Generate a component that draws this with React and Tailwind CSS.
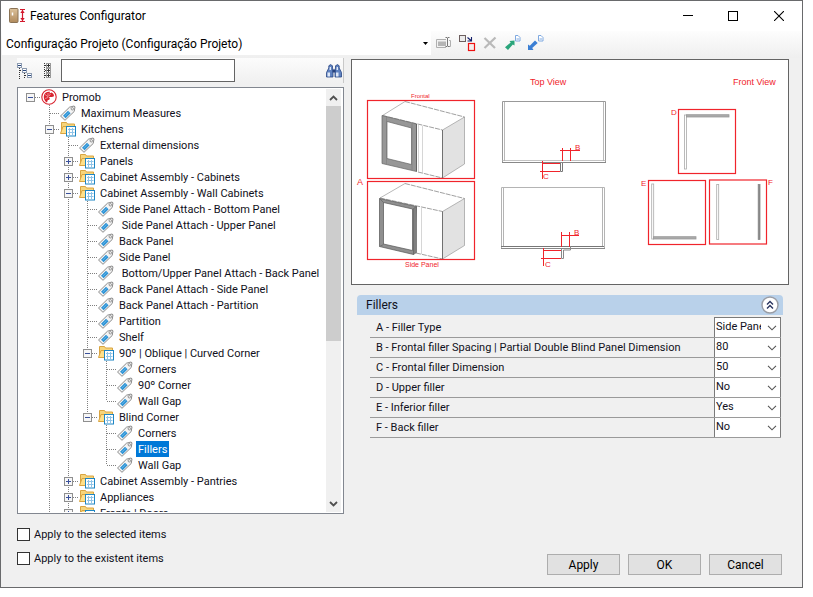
import React, { useState } from 'react';

const TREE = [
  {
    label: 'Promob', icon: 'logo', open: true, children: [
      { label: 'Maximum Measures' },
      {
        label: 'Kitchens', icon: 'folder', open: true, more: true, children: [
          { label: 'External dimensions' },
          { label: 'Panels', icon: 'folder' },
          { label: 'Cabinet Assembly - Cabinets', icon: 'folder' },
          {
            label: 'Cabinet Assembly - Wall Cabinets', icon: 'folder', open: true, children: [
              { label: 'Side Panel Attach - Bottom Panel' },
              { label: ' Side Panel Attach - Upper Panel' },
              { label: 'Back Panel' },
              { label: 'Side Panel' },
              { label: ' Bottom/Upper Panel Attach - Back Panel' },
              { label: 'Back Panel Attach - Side Panel' },
              { label: 'Back Panel Attach - Partition' },
              { label: 'Partition' },
              { label: 'Shelf' },
              {
                label: '90º | Oblique | Curved Corner', icon: 'folder', open: true, children: [
                  { label: 'Corners' }, { label: '90º Corner' }, { label: 'Wall Gap' },
                ],
              },
              {
                label: 'Blind Corner', icon: 'folder', open: true, children: [
                  { label: 'Corners' }, { label: 'Fillers' }, { label: 'Wall Gap' },
                ],
              },
            ],
          },
          { label: 'Cabinet Assembly - Pantries', icon: 'folder' },
          { label: 'Appliances', icon: 'folder' },
          { label: 'Fronts | Doors', icon: 'folder', more: true },
        ],
      },
    ],
  },
];

const PROPERTIES = [
  { id: 'a', label: 'A - Filler Type', options: ['Side Panel', 'Frontal'] },
  { id: 'b', label: 'B - Frontal filler Spacing | Partial Double Blind Panel Dimension', options: ['80', '50'] },
  { id: 'c', label: 'C - Frontal filler Dimension', options: ['50', '80'] },
  { id: 'd', label: 'D - Upper filler', options: ['No', 'Yes'] },
  { id: 'e', label: 'E - Inferior filler', options: ['Yes', 'No'] },
  { id: 'f', label: 'F - Back filler', options: ['No', 'Yes'] },
];

function LogoIcon() {
  return (
    <svg width="18" height="16" viewBox="0 0 18 16" aria-hidden="true" className="shrink-0">
      <circle cx="9" cy="8" r="7.200" fill="#fff" stroke="#d8232f" strokeWidth="1.100" />
      <path d="M7 13.500C3.500 12 2.500 6 6 3.600c1-.8 2.500-1 4-.8l-.5 1.700 2-1c1.800.8 2.500 2 2.500 3.800L12 8H9l.8 1.500c-.2 1-1 1.500-2 1.500z" fill="#d8232f" />
      <path d="M5 5.500 8.500 8M8 4v3.500M5 9.500l3-1M10.500 5l-1.500 2" stroke="#f8b9bd" strokeWidth=".7" />
    </svg>
  );
}

function TagIcon() {
  return (
    <svg width="18" height="16" viewBox="0 0 18 16" aria-hidden="true" className="shrink-0">
      <path d="M1.500 11 10.500 2.200 15 1l1 .8-.8 4.700L6 15.300z" fill="#f4f4f4" stroke="#8b8b8b" strokeWidth="1" strokeLinejoin="round" />
      <path d="m4 10.800 5-5 2.600 2.400-5 5z" fill="#2f94d6" />
      <path d="m5.800 11.300 4-4" stroke="#6fbbea" strokeWidth=".8" />
      <circle cx="13.300" cy="3.800" r="1.200" fill="#fff" stroke="#777" strokeWidth=".8" />
    </svg>
  );
}

function FolderIcon() {
  return (
    <svg width="18" height="16" viewBox="0 0 18 16" aria-hidden="true" className="shrink-0">
      <path d="M2.500 12.500v-11h5l1 1.500h7v4" fill="#f6d57c" stroke="#d9a441" />
      <path d="m1.500 12.500 2.500-7h11v7z" fill="#ffe08a" stroke="#d9a441" />
      <rect x="7.500" y="5.500" width="9" height="9.500" fill="#fff" stroke="#1f86c4" />
      <path d="M9 8.500h6.500M9 11.500h6.500M10.500 7v7M13.500 7v7" stroke="#8fc4e8" />
    </svg>
  );
}

/* One step of the dotted connector between a branch and its parent. */
function Guide({ up, down, across }) {
  return (
    <svg width="19" height="16" viewBox="0 0 19 16" shapeRendering="crispEdges" aria-hidden="true" className="shrink-0">
      <g stroke="#808080" strokeDasharray="1 1" fill="none">
        {up && <path d="M9.500 0v8" />}
        {down && <path d="M9.500 8v8" />}
        {across && <path d="M10 8.500h9" />}
      </g>
    </svg>
  );
}

function Toggle({ open, up, down, onClick, label }) {
  return (
    <button type="button" aria-label={label} onClick={onClick} className="block shrink-0">
      <svg width="19" height="16" viewBox="0 0 19 16" shapeRendering="crispEdges" aria-hidden="true">
        <g stroke="#808080" strokeDasharray="1 1">
          {up && <path d="M9.500 0v4" />}
          {down && <path d="M9.500 12v4" />}
          <path d="M14 8.500h5" />
        </g>
        <rect x="5.500" y="4.500" width="8" height="8" fill="#f6f6f6" stroke="#8f8f8f" />
        <path d="M7 8.500h5" stroke="#39509a" />
        {!open && <path d="M9.500 6v5" stroke="#39509a" />}
      </svg>
    </button>
  );
}

function TreeNode({ node, trail, isLast, selected, onSelect }) {
  const [open, setOpen] = useState(Boolean(node.open));
  const root = trail.length === 0;
  const down = !isLast || Boolean(node.more);
  const current = { up: !root, down: !root && down };
  const active = selected === node.label;
  return (
    <li role="treeitem" aria-expanded={node.icon ? open : undefined}>
      <div className="flex h-4 items-center whitespace-pre">
        {trail.map((line, i) => <Guide key={i} up={line} down={line} />)}
        {node.icon
          ? <Toggle open={open} {...current} label={`Toggle ${node.label}`} onClick={() => setOpen(!open)} />
          : <Guide {...current} across />}
        {node.icon === 'logo' ? <LogoIcon /> : node.icon === 'folder' ? <FolderIcon /> : <TagIcon />}
        <button
          type="button"
          onClick={() => onSelect(node.label)}
          className={active ? 'ml-0.5 h-4 bg-[#0078d7] px-0.5 leading-[18px] text-white' : 'ml-0.5 h-4 px-0.5 leading-[18px] text-[#101020]'}
        >
          {node.label}
        </button>
      </div>
      {node.children && open && (
        <ul role="group">
          {node.children.map((child, i) => (
            <TreeNode
              key={child.label}
              node={child}
              trail={[...trail, !root && down]}
              isLast={i === node.children.length - 1}
              selected={selected}
              onSelect={onSelect}
            />
          ))}
        </ul>
      )}
    </li>
  );
}

function DoorIcon() {
  return (
    <svg width="18" height="16" viewBox="0 0 18 16" aria-hidden="true">
      <defs>
        <linearGradient id="door" x1="0" x2="0" y1="0" y2="1">
          <stop offset="0" stopColor="#dcc29b" />
          <stop offset="1" stopColor="#b08a5c" />
        </linearGradient>
      </defs>
      <rect x="1.500" y=".5" width="8.500" height="14" rx="1" fill="url(#door)" stroke="#8a7355" />
      <path d="M4.500 4.500v3" stroke="#fff" strokeWidth="1.500" />
      <path d="M12 1.500h5M12 13.500h5M14.500 2v11" stroke="#d3182c" strokeWidth="1.200" />
      <path d="m12.300 5 2.200-3 2.200 3zM12.300 10l2.200 3 2.200-3z" fill="#d3182c" />
    </svg>
  );
}

function RenameIcon() {
  return (
    <svg width="18" height="16" viewBox="0 0 18 16" aria-hidden="true">
      <path d="M11 4.500H1.500v8H11" fill="#f2f2f2" stroke="#b0b0b0" />
      <path d="M14 5.500h1.500v6H14" fill="none" stroke="#b0b0b0" />
      <rect x="3" y="6.500" width="8" height="4.500" fill="#b5b5b5" />
      <path d="M10.500 2.500h1.500l.5.500.5-.5h1.500M12.500 3v8M10.500 11.500h1.500l.5-.5.5.5h1.500" fill="none" stroke="#777" />
    </svg>
  );
}

function ReplaceIcon() {
  return (
    <svg width="18" height="18" viewBox="0 0 18 18" aria-hidden="true">
      <rect x="1.500" y="1.500" width="6" height="6" fill="#ececec" stroke="#6d5f5f" />
      <rect x="10.500" y="9.500" width="6" height="7" fill="#f4eeee" stroke="#ee1111" strokeWidth="1.200" />
      <path d="m9.500 3.500 3.500 3M13.500 3v4h-4" fill="none" stroke="#15206b" strokeWidth="1.100" />
    </svg>
  );
}

function DeleteIcon() {
  return (
    <svg width="14" height="14" viewBox="0 0 14 14" aria-hidden="true">
      <path d="m1.500 2 10.500 10M12.500 1.500 1.500 12" stroke="#b9b9b9" strokeWidth="2.200" />
    </svg>
  );
}

function PageGlyph() {
  return (
    <>
      <path d="M11.500.5h2.500l2 2v3.500h-4.500z" fill="#fff" stroke="#7fa9e0" />
      <path d="M12.500 4h2.500" stroke="#7fa9e0" />
    </>
  );
}

function ExportIcon() {
  return (
    <svg width="17" height="16" viewBox="0 0 17 16" aria-hidden="true">
      <PageGlyph />
      <path d="M10.500 5.500v5L8.800 9.500 4 15 1 12.200 6.700 7.500 5.500 6z" fill="#2aa57b" />
    </svg>
  );
}

function ImportIcon() {
  return (
    <svg width="17" height="16" viewBox="0 0 17 16" aria-hidden="true">
      <PageGlyph />
      <path d="M1 15V9.500l1.800 1.300L8 5.500 10.700 8 5.200 13l1.300 2z" fill="#3b7fd4" />
    </svg>
  );
}

function CollapseAllIcon() {
  return (
    <svg width="16" height="16" viewBox="0 0 16 16" shapeRendering="crispEdges" aria-hidden="true">
      <path d="M2.500 5v11M3 7.500h3M7.500 10v6M8 12.500h3" stroke="#333" strokeDasharray="1 1" />
      <g fill="#fff" stroke="#8d9bb0">
        <rect x=".5" y=".5" width="4" height="4" />
        <rect x="5.500" y="5.500" width="4" height="4" />
        <rect x="10.500" y="10.500" width="4" height="4" />
      </g>
      <path d="M1 2.500h3M6 7.500h3M11 12.500h3" stroke="#2b4a80" />
    </svg>
  );
}

function ExpandAllIcon() {
  return (
    <svg width="9" height="16" viewBox="0 0 9 16" shapeRendering="crispEdges" aria-hidden="true">
      <path d="M1.500 0v16M2 2.500h2M2 7.500h2M2 12.500h2" stroke="#333" strokeDasharray="1 1" />
      <g fill="#fff" stroke="#999">
        <rect x="3.500" y=".5" width="4" height="4" />
        <rect x="3.500" y="5.500" width="4" height="4" />
        <rect x="3.500" y="10.500" width="4" height="4" />
      </g>
      <path d="M4 2.500h3M5.500 1v3M4 7.500h3M5.500 6v3M4 12.500h3M5.500 11v3" stroke="#333" />
    </svg>
  );
}

function BinocularsIcon() {
  return (
    <svg width="16" height="14" viewBox="0 0 16 14" aria-hidden="true">
      <path d="M.5 13V8.500L2.800 4V1.800L4.500.6l2 1.200V4L7 6v7zM15.500 13V8.500L13.200 4V1.800L11.500.6l-2 1.200V4L9 6v7z" fill="#5f82c0" stroke="#2a4684" strokeWidth=".8" />
      <path d="M6.500 5.500h3v3h-3z" fill="#27427e" />
      <path d="M1.500 8.500h2.500V12.500H1.500zM10 8.500h2.500v4H10zM3.700 3h1.300v3H3.500zM10.700 3H12v3h-1.500z" fill="#dfe8f7" />
    </svg>
  );
}

/* Technical drawing of the filler positions A to F. */
function FillerDrawing() {
  const red = '#f0242b';
  return (
    <svg viewBox="352 60 436 224" role="img" aria-label="Filler positions" className="block h-[224px] w-full" fontFamily='"Liberation Sans", Arial, sans-serif' fill={red}>
      <text x="530" y="85" fontSize="9">Top View</text>
      <text x="733" y="85" fontSize="9">Front View</text>
      <text x="357" y="185" fontSize="9">A</text>
      <text x="411" y="98" fontSize="6">Frontal</text>
      <text x="405" y="267" fontSize="7">Side Panel</text>
      <text x="575" y="150" fontSize="8">B</text>
      <text x="543" y="179" fontSize="8">C</text>
      <text x="574" y="235" fontSize="8">B</text>
      <text x="545" y="267" fontSize="8">C</text>
      <text x="671" y="115" fontSize="8">D</text>
      <text x="641" y="186" fontSize="8">E</text>
      <text x="768" y="185" fontSize="8">F</text>

      <g stroke="#999" strokeWidth=".7" fill="none">
        <path d="M464.500 117v47L442.500 178v-48z" fill="#e2e2e2" />
        <path d="M382.500 115.500 405 101.500" />
        <path d="M405 101.500 464.500 117M382.500 115.500l60 14.500M418 172l24.500 6" strokeDasharray="5 1" stroke="#777" />
        <path d="M418.500 125v47M422.500 126v47" stroke="#c4c4c4" />
        <path fillRule="evenodd" d="M382 115.500 416.500 124v47.500l-34.500-8zM387 121.500v37l24.500 6V128z" fill="#979797" stroke="#666" />
        <path d="M386.500 117v47M412 124v46" stroke="#777" strokeWidth=".5" />
        <path d="M416.500 124v47.500M442.500 130v48" stroke="#555" />
      </g>
      <g stroke="#999" strokeWidth=".7" fill="none">
        <path d="M464.500 198.500v47L442.500 259v-47.500z" fill="#e2e2e2" />
        <path d="M380 198 405 183.500" />
        <path d="M405 183.500 464.500 198.500M380 198l62.500 13.500M416 253l26.500 6" strokeDasharray="5 1" stroke="#777" />
        <path d="M421.500 208v46" stroke="#c4c4c4" />
        <path fillRule="evenodd" d="M379.500 198.500 416.500 206.500 413.500 254.500 379.500 246.500zM383.500 202.500v41.500l29 6.500V209z" fill="#8f8f8f" stroke="#555" />
        <path d="M416.500 206.500v46l-3 2v-46zM379.500 198.500l4 4M379.500 246.500l4-2" fill="#808080" stroke="#666" />
        <path d="M442.500 211.500V259" stroke="#555" />
      </g>

      <g stroke="#aaa" fill="none">
        <path d="M502.500 162.500v-61h103v61" stroke="#999" />
        <path d="M504.500 102v59M603.500 102v59" stroke="#999" strokeWidth=".7" />
        <path d="M502 160.500h104" strokeWidth=".7" />
        <path d="M502 162.500h104" stroke="#888" />
        <path d="M560.500 163v8.500h2V163" stroke="#777" />
        <path d="M501.500 248.500v-61h103v61M503.500 188v59M602.500 188v59" stroke="#b4b4b4" />
        <path d="M501 246.500h103" stroke="#777" />
        <path d="M501 248.500h104M561.500 249v9.500h2V250h7v-4" stroke="#888" />
      </g>

      <g stroke={red} fill="none">
        <rect x="367.500" y="100.500" width="107" height="78" strokeWidth="1.200" />
        <rect x="367.500" y="181.500" width="107" height="78" strokeWidth="1.200" />
        <path d="M562.500 148v13M570.500 148v13M560 150.500h20M542.500 161v18M542 163.500h18M540 171.500h20" />
        <path d="M561.500 232v15M569.500 232v15M561 235.500h18M543.500 248v18M544 250.500h17M541 258.500h20" />
        <rect x="678.500" y="109.500" width="57" height="64" strokeWidth="1.200" />
        <rect x="648.500" y="180.500" width="57" height="64" strokeWidth="1.200" />
        <rect x="709.500" y="180" width="57" height="64" strokeWidth="1.200" />
      </g>

      <g fill="#fff" stroke="#aaa" strokeWidth=".8">
        <rect x="684.500" y="115" width="2" height="54" />
        <rect x="686.500" y="114.700" width="42.500" height="2.300" fill="#aaa" stroke="#999" />
        <rect x="651.700" y="184" width="2" height="55" />
        <rect x="653.500" y="236.700" width="42.500" height="2.300" fill="#aaa" stroke="#999" />
        <rect x="716.700" y="184.500" width="2" height="55" />
        <rect x="758.200" y="184.500" width="1.800" height="55" fill="#888" stroke="#888" />
      </g>
    </svg>
  );
}

function WindowControls() {
  return (
    <div className="flex self-stretch">
      <button type="button" aria-label="Minimize" className="flex w-[45px] items-center justify-center">
        <svg width="10" height="10" viewBox="0 0 10 10" shapeRendering="crispEdges"><path d="M0 4.500h10" stroke="#000" /></svg>
      </button>
      <button type="button" aria-label="Maximize" className="flex w-[45px] items-center justify-center">
        <svg width="10" height="10" viewBox="0 0 10 10" shapeRendering="crispEdges"><rect x=".5" y=".5" width="9" height="9" fill="none" stroke="#000" /></svg>
      </button>
      <button type="button" aria-label="Close" className="flex w-[47px] items-center justify-center">
        <svg width="10" height="10" viewBox="0 0 10 10"><path d="m0 0 10 10m0-10L0 10" stroke="#000" strokeWidth="1.100" /></svg>
      </button>
    </div>
  );
}

function PropertySelect({ id, options }) {
  return (
    <div className="relative h-full w-[67px] shrink-0 border-x border-[#7a7a7a] bg-white">
      <select id={id} className="block h-full w-full appearance-none bg-transparent pr-[19px] pl-px text-[11px] text-[#101020] outline-none">
        {options.map((o) => <option key={o}>{o}</option>)}
      </select>
      <svg width="10" height="6" viewBox="0 0 10 6" aria-hidden="true" className="pointer-events-none absolute top-[7px] right-[3px]">
        <path d="m1 .8 4 4 4-4" fill="none" stroke="#555" strokeWidth="1.100" />
      </svg>
    </div>
  );
}

export default function App() {
  const [selected, setSelected] = useState('Fillers');
  return (
    <div className='min-h-screen bg-white pr-2.5 pb-[9px] font-["Roboto","Liberation_Sans",sans-serif] text-[11px] text-[#101020]'>
      <div className="flex flex-col border border-[#696a6c] bg-[#f0f0f0]">
        <header className="flex h-[30px] items-center bg-white pl-[7px]">
          <DoorIcon />
          <h1 className="ml-1 flex-1 text-xs text-black">Features Configurator</h1>
          <WindowControls />
        </header>

        <div className="flex h-[27px] items-start bg-linear-to-b from-[#fdfdfd] to-[#efefef] pl-px">
          <div className="relative h-6 w-[429px]">
            <select aria-label="Project configuration" className="block h-full w-full appearance-none bg-white pt-0.5 pl-1 text-xs text-black outline-none">
              <option>Configuração Projeto (Configuração Projeto)</option>
            </select>
            <svg width="5" height="3" viewBox="0 0 5 3" aria-hidden="true" className="pointer-events-none absolute top-[11px] right-[3px]">
              <path d="M0 0h5L2.500 3z" fill="#000" />
            </svg>
          </div>
          <div className="flex h-6 items-center gap-[5px] pl-1">
            <button type="button" aria-label="Rename"><RenameIcon /></button>
            <button type="button" aria-label="Replace"><ReplaceIcon /></button>
            <button type="button" aria-label="Delete" className="pl-0.5"><DeleteIcon /></button>
            <button type="button" aria-label="Export" className="pl-0.5"><ExportIcon /></button>
            <button type="button" aria-label="Import" className="pl-px"><ImportIcon /></button>
          </div>
        </div>

        <div className="flex gap-[7px] pr-[13px] pl-4">
          <div className="flex w-[327px] shrink-0 flex-col">
            <div className="flex h-[25px] items-center border-r border-[#c8c8c8] bg-linear-to-b from-[#fcfcfc] to-[#f0f0f0] pr-px">
              <button type="button" aria-label="Collapse all"><CollapseAllIcon /></button>
              <button type="button" aria-label="Expand all" className="ml-2.5"><ExpandAllIcon /></button>
              <input type="text" aria-label="Search" className="ml-[9px] h-[23px] w-[174px] border border-[#646464] bg-white px-1 outline-none" />
              <button type="button" aria-label="Find" className="ml-auto"><BinocularsIcon /></button>
            </div>

            <div className="mt-1 flex h-[427px] border border-[#828790] bg-white">
              <div className="min-w-0 flex-1 overflow-hidden pt-px pb-px pl-[3px]">
                <div className="h-full overflow-hidden">
                  <ul role="tree" aria-label="Features">
                    {TREE.map((node) => (
                      <TreeNode key={node.label} node={node} trail={[]} isLast selected={selected} onSelect={setSelected} />
                    ))}
                  </ul>
                </div>
              </div>
              <div className="my-px mr-0.5 flex w-[15px] flex-col bg-[#f0f0f0]">
                <button type="button" aria-label="Scroll up" className="flex h-[17px] items-center justify-center">
                  <svg width="9" height="6" viewBox="0 0 9 6" aria-hidden="true"><path d="m1 5 3.500-3.500L8 5" fill="none" stroke="#505050" strokeWidth="1.800" /></svg>
                </button>
                <div className="flex-1">
                  <div className="h-[235px] bg-[#cdcdcd]" />
                </div>
                <button type="button" aria-label="Scroll down" className="flex h-[17px] items-center justify-center">
                  <svg width="9" height="6" viewBox="0 0 9 6" aria-hidden="true"><path d="m1 1 3.500 3.500L8 1" fill="none" stroke="#505050" strokeWidth="1.800" /></svg>
                </button>
              </div>
            </div>
          </div>

          <div className="min-w-0 flex-1">
            <div className="mt-px border border-[#646464] bg-white">
              <FillerDrawing />
            </div>

            <section className="mt-2.5 mr-1.5 ml-1.5">
              <div className="flex h-5 items-center justify-between rounded-t bg-[#b9d1ea] pr-1 pl-[9px]">
                <h2 className="text-xs">Fillers</h2>
                <button type="button" aria-label="Collapse Fillers">
                  <svg width="18" height="18" viewBox="0 0 18 18" aria-hidden="true">
                    <circle cx="9" cy="9" r="8" fill="#fff" stroke="#9a9da5" strokeWidth="1.400" />
                    <path d="m6 8.500 3-3 3 3M6 12.500l3-3 3 3" fill="none" stroke="#27335f" strokeWidth="1.400" />
                  </svg>
                </button>
              </div>
              <div className="mt-0.5 mr-0.5 ml-[13px]">
                {PROPERTIES.map((p, i) => (
                  <div key={p.id} className="flex h-5 items-stretch border-b border-[#9a9a9a] first:h-[21px]">
                    <label htmlFor={p.id} className="flex min-w-0 flex-1 items-center pt-0.5 pl-1.5 whitespace-nowrap">{p.label}</label>
                    <div className={i === 0 ? 'border-t border-[#7a7a7a]' : ''}>
                      <PropertySelect id={p.id} options={p.options} />
                    </div>
                  </div>
                ))}
              </div>
            </section>
          </div>
        </div>

        <footer className="flex items-start justify-between pt-3.5 pr-5 pb-3 pl-4">
          <div className="flex flex-col gap-[11px]">
            <label className="flex h-[13px] items-center gap-1">
              <input type="checkbox" className="h-[13px] w-[13px] appearance-none border border-[#333] bg-white checked:bg-[#0078d7]" />
              <span className="pt-px">Apply to the selected items</span>
            </label>
            <label className="flex h-[13px] items-center gap-1">
              <input type="checkbox" className="h-[13px] w-[13px] appearance-none border border-[#333] bg-white checked:bg-[#0078d7]" />
              <span className="pt-px">Apply to the existent items</span>
            </label>
          </div>
          <div className="flex gap-2 pt-[26px]">
            {['Apply', 'OK', 'Cancel'].map((name) => (
              <button key={name} type="button" className="h-[21px] w-[73px] border border-[#adadad] bg-[#e1e1e1] text-xs text-black">{name}</button>
            ))}
          </div>
        </footer>
      </div>
    </div>
  );
}
